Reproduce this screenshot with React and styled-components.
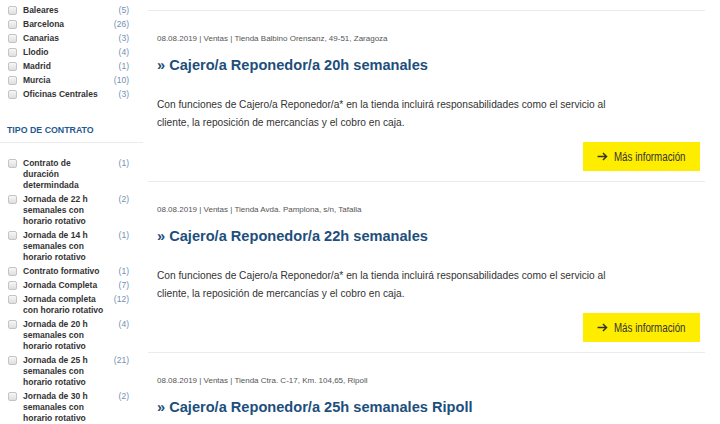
import React from "react";
import styled, { createGlobalStyle } from "styled-components";

const provincias = [
  { name: "Baleares", count: 5 },
  { name: "Barcelona", count: 26 },
  { name: "Canarias", count: 3 },
  { name: "Llodio", count: 4 },
  { name: "Madrid", count: 1 },
  { name: "Murcia", count: 10 },
  { name: "Oficinas Centrales", count: 3 },
];

const contratos = [
  { name: "Contrato de duración determindada", count: 1 },
  { name: "Jornada de 22 h semanales con horario rotativo", count: 2 },
  { name: "Jornada de 14 h semanales con horario rotativo", count: 1 },
  { name: "Contrato formativo", count: 1 },
  { name: "Jornada Completa", count: 7 },
  { name: "Jornada completa con horario rotativo", count: 12 },
  { name: "Jornada de 20 h semanales con horario rotativo", count: 4 },
  { name: "Jornada de 25 h semanales con horario rotativo", count: 21 },
  { name: "Jornada de 30 h semanales con horario rotativo", count: 2 },
];

const ofertas = [
  {
    meta: "08.08.2019 | Ventas | Tienda Balbino Orensanz, 49-51, Zaragoza",
    title: "» Cajero/a Reponedor/a 20h semanales",
  },
  {
    meta: "08.08.2019 | Ventas | Tienda Avda. Pamplona, s/n, Tafalla",
    title: "» Cajero/a Reponedor/a 22h semanales",
  },
  {
    meta: "08.08.2019 | Ventas | Tienda Ctra. C-17, Km. 104,65, Ripoll",
    title: "» Cajero/a Reponedor/a 25h semanales Ripoll",
  },
];

const desc =
  "Con funciones de Cajero/a Reponedor/a* en la tienda incluirá responsabilidades como el servicio al cliente, la reposición de mercancías y el cobro en caja.";

const Global = createGlobalStyle`
  html, body { margin: 0; padding: 0; background: #fff; }
  body {
    font-family: "Liberation Sans", Arial, sans-serif;
    color: #333;
    overflow: hidden;
  }
`;

function Filter({ items }) {
  return (
    <FilterList>
      {items.map((it) => (
        <FilterRow key={it.name}>
          <Box />
          <FilterName>{it.name}</FilterName>
          <Count>({it.count})</Count>
        </FilterRow>
      ))}
    </FilterList>
  );
}

export default function App() {
  return (
    <>
      <Global />
      <Page>
        <Sidebar>
          <Filter items={provincias} />
          <Heading>TIPO DE CONTRATO</Heading>
          <Filter items={contratos} />
        </Sidebar>
        <Main>
          {ofertas.map((o) => (
            <Card key={o.title}>
              <Meta>{o.meta}</Meta>
              <Title>{o.title}</Title>
              <Desc>{desc}</Desc>
              <Actions>
                <MoreButton>
                  <Arrow viewBox="0 0 12 10">
                    <path d="M0.5 5h10M6.5 1l4 4-4 4" fill="none" stroke="#333" strokeWidth="1.6" />
                  </Arrow>
                  <ButtonLabel>Más información</ButtonLabel>
                </MoreButton>
              </Actions>
            </Card>
          ))}
        </Main>
      </Page>
    </>
  );
}

const Page = styled.div`
  display: flex;
  width: 720px;
  height: 424px;
  overflow: hidden;
`;

const Sidebar = styled.aside`
  width: 143px;
  flex-shrink: 0;
  padding-top: 5px;
`;

const FilterList = styled.div`
  display: flex;
  flex-direction: column;
  gap: 3px;
  padding: 0 14px 0 8px;
`;

const FilterRow = styled.div`
  display: grid;
  grid-template-columns: 9px 84px 1fr;
  column-gap: 6px;
  align-items: start;
  font-size: 8.5px;
  line-height: 11px;
`;

const Box = styled.span`
  width: 9px;
  height: 9px;
  margin-top: 1px;
  box-sizing: border-box;
  border: 1px solid #c4c4c4;
  border-radius: 2px;
  background: linear-gradient(#f7f7f7, #dedede);
`;

const FilterName = styled.span`
  font-weight: bold;
  color: #333;
`;

const Count = styled.span`
  text-align: right;
  color: #6f90b3;
`;

const Heading = styled.h3`
  margin: 25px 0 15px;
  padding: 0 0 6px 7px;
  border-bottom: 1px solid #ececec;
  font-size: 8.8px;
  line-height: 11px;
  font-weight: bold;
  color: #1d5a92;
`;

const Main = styled.main`
  flex: 1;
  margin: 10px 15px 0 5px;
`;

const Card = styled.article`
  border-top: 1px solid #ebebeb;
  padding: 22px 5px 10px 9px;
`;

const Meta = styled.div`
  font-size: 8px;
  line-height: 12px;
  color: #555;
`;

const Title = styled.h2`
  margin: 10px 0 0;
  font-size: 14.6px;
  line-height: 20px;
  font-weight: bold;
  color: #1d4f7c;
`;

const Desc = styled.p`
  margin: 21px 0 0;
  width: 455px;
  font-size: 10.2px;
  line-height: 18px;
  color: #333;
`;

const Actions = styled.div`
  display: flex;
  justify-content: flex-end;
  margin-top: 10px;
`;

const MoreButton = styled.button`
  display: flex;
  align-items: center;
  justify-content: center;
  gap: 6px;
  width: 117px;
  height: 29px;
  border: 0;
  padding: 0;
  background: #ffed00;
  color: #333;
  font-family: "Liberation Sans", Arial, sans-serif;
  font-size: 12.5px;
  cursor: pointer;
`;

const ButtonLabel = styled.span`
  display: inline-block;
  width: 72px;
  white-space: nowrap;
  transform: scaleX(0.78);
  transform-origin: left center;
`;

const Arrow = styled.svg`
  width: 11px;
  height: 9px;
`;
